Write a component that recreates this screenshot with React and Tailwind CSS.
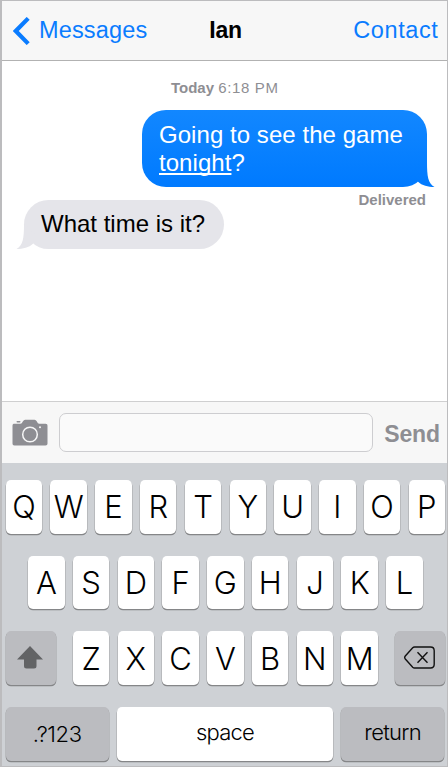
const SANS = "font-['Liberation_Sans',Arial,sans-serif]";
const LIGHT = "font-['Inter','Liberation_Sans',sans-serif] font-light";

function Key({ children }) {
  return (
    <div className="flex h-[53.5px] w-[36.5px] shrink-0 items-center justify-center rounded-[5px] bg-white text-[31px] leading-none text-black shadow-[0_1px_0_0.3px_#858688]">
      <span>{children}</span>
    </div>
  );
}

function DarkKey({ className, children }) {
  return (
    <div className={`flex h-[53.5px] shrink-0 items-center justify-center rounded-[5px] bg-[#bbbcc0] leading-none text-black shadow-[0_1px_0_0.3px_#858688] ${className}`}>
      {children}
    </div>
  );
}

function Row({ letters, className = '' }) {
  return (
    <div className={`flex gap-[8.28px] ${className}`}>
      {letters.split('').map((l) => (
        <Key key={l}>{l}</Key>
      ))}
    </div>
  );
}

function Header() {
  return (
    <header className="grid h-[60px] grid-cols-[1fr_auto_1fr] items-center border-b border-[#b2b2b2] bg-[#f7f7f7] pr-[9px] pl-[11px] text-[23.5px] leading-none text-[#0a7cff]">
      <div className="flex items-center gap-[9px]">
        <svg width="17" height="28" viewBox="0 0 17 28" fill="none" stroke="currentColor" strokeWidth="4.2">
          <path d="M15.2 1.400 2.800 14l12.400 12.600" />
        </svg>
        <span className="tracking-[0.15px]">Messages</span>
      </div>
      <h1 className="text-[23px] font-bold tracking-[-0.3px] text-black">Ian</h1>
      <span className="-mr-[0.5px] justify-self-end tracking-[0.6px]">Contact</span>
    </header>
  );
}

function Conversation() {
  return (
    <main className="flex h-[340px] flex-col bg-white">
      <div className="mt-[18px] ml-[169px] h-[18px] text-[15px] leading-[18px] whitespace-nowrap text-[#8e8e93]">
        <b>Today</b> <span className="tracking-[0.65px]">6:18 PM</span>
      </div>
      <div className="relative mt-[13px] mr-5 h-[77px] w-[285px] self-end rounded-[24px] bg-linear-to-b from-[#1287ff] to-[#007aff] pt-[11px] pl-[17px] text-[24px] leading-7 whitespace-nowrap text-white">
        <svg className="absolute right-[-8px] bottom-0" width="28" height="30" viewBox="0 0 28 30">
          <defs>
            <linearGradient id="tail" gradientUnits="userSpaceOnUse" x1="0" y1="0" x2="0" y2="30">
              <stop offset="0" stopColor="#077fff" />
              <stop offset="1" stopColor="#007aff" />
            </linearGradient>
          </defs>
          <path d="M20 5C20 19 21 26.500 27.500 30 21 30 15 28.500 11 24.800L9 15Z" fill="url(#tail)" />
        </svg>
        <p className="relative tracking-[0.05px]">
          Going to see the game
          <br />
          <span className="underline decoration-[1.5px] underline-offset-[2px] [text-decoration-skip-ink:none]">tonight</span>?
        </p>
      </div>
      <div className="mr-[21px] h-[13px] self-end pt-[4px] text-[15px] leading-[18px] font-bold text-[#8e8e93]">Delivered</div>
      <div className="relative ml-[22px] h-[49px] w-[200px] rounded-[24.5px] bg-[#e5e5ea] pl-[17px] text-[24px] leading-[49px] whitespace-nowrap text-black">
        <svg className="absolute bottom-0 left-[-8px]" width="28" height="30" viewBox="0 0 28 30" fill="#e5e5ea">
          <path d="M8 5C8 19 7 26.500.5 30 7 30 13 28.500 17 24.800L19 15Z" />
        </svg>
        <p className="relative -top-px">What time is it?</p>
      </div>
    </main>
  );
}

function Composer() {
  return (
    <div className="flex h-[62px] items-center border-t border-[#cfcfd0] bg-[#f7f7f7] pr-[7px] pl-[10px]">
      <svg width="36" height="27" viewBox="0 0 36 27" fill="#8e8e93">
        <path d="M2.500 4.800H8.500c2 0 2.300-4 4.700-4H22.500c2.500 0 2.700 4 4.700 4h6.300c1.500 0 2 .7 2 2v17.700c0 1.300-.7 2-2 2h-31c-1.300 0-2-.7-2-2V6.800c0-1.400.7-2 2-2Z" />
        <rect x="4.500" y="2" width="4" height="1.500" rx=".7" />
        <circle cx="18" cy="15.500" r="7.300" fill="none" stroke="#f7f7f7" strokeWidth="1.500" />
        <circle cx="28" cy="8.300" r="1" fill="#f7f7f7" />
      </svg>
      <div className="ml-[11px] h-[39px] w-[313.500px] rounded-[7px] border border-[#cdcdd0] bg-[#fafafa]" />
      <span className="mt-[3px] ml-auto text-[23px] leading-none font-bold tracking-[-0.1px] text-[#8e8e93]">Send</span>
    </div>
  );
}

function Keyboard() {
  return (
    <section className={`flex h-[303px] flex-col gap-[22.2px] bg-[#ced1d5] pt-[17px] pl-[3.700px] ${LIGHT}`}>
      <Row letters="QWERTYUIOP" />
      <Row letters="ASDFGHJKL" className="ml-[22.4px]" />
      <div className="flex">
        <DarkKey className="w-[50px]">
          <svg className="-mt-px -ml-[2px]" width="26" height="23" viewBox="0 0 26 23" fill="#626365">
            <path d="M13 0 26 13.500h-6.500V20q0 2.500-2.500 2.500H9.500Q7 22.500 7 20v-6.500H0Z" />
          </svg>
        </DarkKey>
        <Row letters="ZXCVBNM" className="mx-[17.100px]" />
        <DarkKey className="w-[49.700px]">
          <svg className="-mt-px" width="31" height="23" viewBox="0 0 31 23" fill="none" stroke="#111" strokeWidth="1.400">
            <path d="M10.500 1H26.500q3.700 0 3.700 3.700v13.600q0 3.700-3.700 3.700H10.500Q9.500 22 8.700 21.200L1.300 13q-1.200-1.500 0-3L8.700 1.800Q9.500 1 10.500 1Z" />
            <path d="m13.500 6.300 10 10.400m0-10.400-10 10.400" />
          </svg>
        </DarkKey>
      </div>
      <div className="flex gap-[8.500px] text-[22px] tracking-[-0.4px]">
        <DarkKey className="w-[103px]">.?123</DarkKey>
        <div className="flex h-[53.5px] w-[215.500px] shrink-0 items-center justify-center rounded-[5px] bg-white pb-[3px] leading-none tracking-[-0.8px] text-black shadow-[0_1px_0_0.3px_#858688]">
          space
        </div>
        <DarkKey className="w-[103px] pb-[3px] tracking-[-0.7px]">return</DarkKey>
      </div>
    </section>
  );
}

export default function App() {
  return (
    <div className={`h-[767px] w-[448px] overflow-hidden border border-l-2 border-[#bcbcbe] bg-white ${SANS}`}>
      <Header />
      <Conversation />
      <Composer />
      <Keyboard />
    </div>
  );
}
